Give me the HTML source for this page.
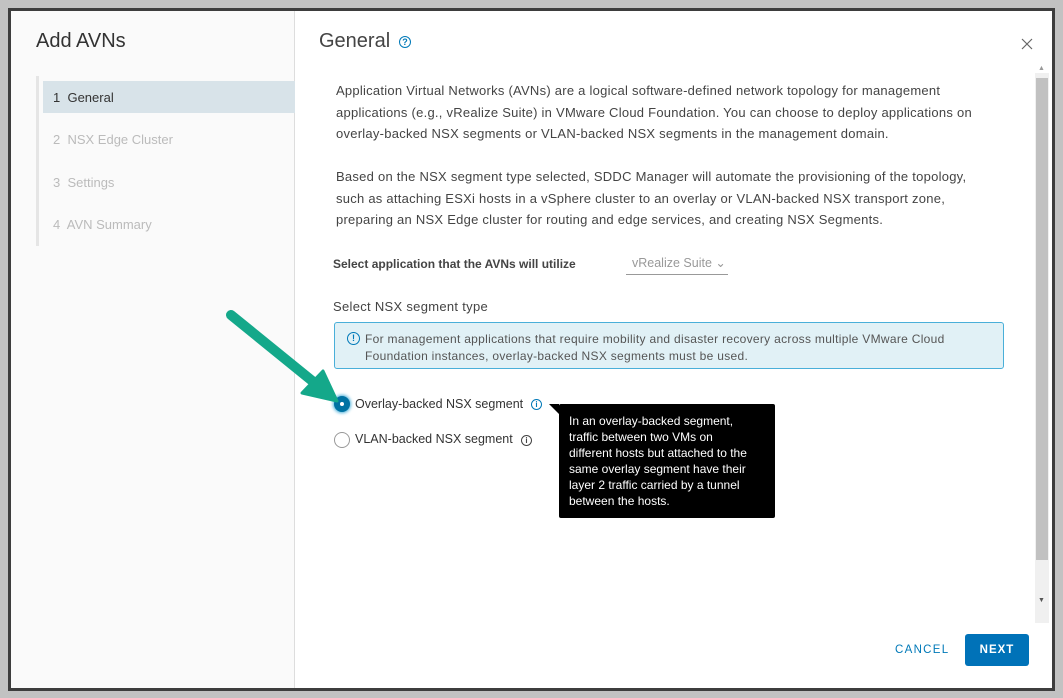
<!DOCTYPE html>
<html><head><meta charset="utf-8"><style>
*{box-sizing:border-box;margin:0;padding:0}
body{width:1063px;height:698px;background:#c2c2c2;font-family:"Liberation Sans",sans-serif;position:relative;overflow:hidden}
.frame{position:absolute;left:8px;top:8px;width:1047px;height:683px;background:#3d3d3d}
.win{position:absolute;left:11px;top:11px;width:1041px;height:677px;background:#fff}
.left{position:absolute;left:0;top:0;width:284px;height:677px;background:#fafafa;border-right:1px solid #ddd}
.t{position:absolute;color:#333;white-space:nowrap}
p.b{position:absolute;left:336px;font-size:13px;color:#444;line-height:21.5px;white-space:nowrap;letter-spacing:0.25px}
</style></head><body>
<div class="frame"></div>
<div class="win">
<div class="left">
<div class="t" style="left:25px;top:19px;font-size:20px;color:#333">Add AVNs</div>
<div style="position:absolute;left:25px;top:65px;width:3px;height:170px;background:#e5e5e5"></div>
<div style="position:absolute;left:32px;top:70px;width:252px;height:32px;background:#d8e3e9"></div>
<div class="t" style="left:42px;top:79px;font-size:13px;color:#333">1&nbsp; General</div>
<div class="t" style="left:42px;top:121px;font-size:13px;color:#bbb">2&nbsp; NSX Edge Cluster</div>
<div class="t" style="left:42px;top:164px;font-size:13px;color:#bbb">3&nbsp; Settings</div>
<div class="t" style="left:42px;top:206px;font-size:13px;color:#bbb">4&nbsp; AVN Summary</div>
</div>
<div class="t" style="left:308px;top:19px;font-size:20px;color:#444">General</div>
<div style="position:absolute;left:388px;top:25px;width:12px;height:12px;border:1.3px solid #0079b8;border-radius:50%;color:#0079b8;font-size:9px;line-height:10px;text-align:center;font-weight:bold">?</div>
<svg style="position:absolute;left:1010px;top:27px" width="12" height="12"><path d="M1 1L11 11M11 1L1 11" stroke="#666" stroke-width="1.2"/></svg>
<div style="position:absolute;left:1024px;top:62px;width:14px;height:550px;background:#f0f0f0"></div>
<div style="position:absolute;left:1025px;top:67px;width:12px;height:482px;background:#c1c1c1"></div>
<div style="position:absolute;left:1027px;top:54px;font-size:7px;color:#999">&#9650;</div>
<div style="position:absolute;left:1027px;top:586px;font-size:7px;color:#555">&#9660;</div>
</div>
<p class="b" style="top:80px">Application Virtual Networks (AVNs) are a logical software-defined network topology for management<br>applications (e.g., vRealize Suite) in VMware Cloud Foundation. You can choose to deploy applications on<br>overlay-backed NSX segments or VLAN-backed NSX segments in the management domain.</p>
<p class="b" style="top:166px">Based on the NSX segment type selected, SDDC Manager will automate the provisioning of the topology,<br>such as attaching ESXi hosts in a vSphere cluster to an overlay or VLAN-backed NSX transport zone,<br>preparing an NSX Edge cluster for routing and edge services, and creating NSX Segments.</p>
<div class="t" style="left:333px;top:257px;font-size:12px;font-weight:bold;color:#444">Select application that the AVNs will utilize</div>
<div style="position:absolute;left:626px;top:255px;width:102px;height:20px;border-bottom:1px solid #999;font-size:12.5px;color:#999;padding-left:6px;white-space:nowrap">vRealize Suite &#8964;</div>
<div class="t" style="left:333px;top:299px;font-size:13px;color:#444;letter-spacing:0.3px">Select NSX segment type</div>
<div style="position:absolute;left:334px;top:322px;width:670px;height:47px;background:#e1f1f6;border:1px solid #49afd9;border-radius:3px"></div>
<div style="position:absolute;left:347px;top:332px;width:13px;height:13px;border:1.3px solid #0079b8;border-radius:50%;color:#0079b8;font-size:9px;line-height:11px;text-align:center;font-weight:bold">!</div>
<div class="t" style="left:365px;top:331px;font-size:12px;color:#555;line-height:17px;letter-spacing:0.3px">For management applications that require mobility and disaster recovery across multiple VMware Cloud<br>Foundation instances, overlay-backed NSX segments must be used.</div>
<div style="position:absolute;left:334px;top:396px;width:16px;height:16px;border-radius:50%;background:#0072a3;box-shadow:0 0 3px 1px #49afd9"></div>
<div style="position:absolute;left:340px;top:402px;width:4px;height:4px;background:#fff;border-radius:50%"></div>
<div class="t" style="left:355px;top:397px;font-size:12.5px;color:#333">Overlay-backed NSX segment</div>
<div style="position:absolute;left:531px;top:399px;width:11px;height:11px;border:1.2px solid #0079b8;border-radius:50%;color:#0079b8;font-size:8px;line-height:9px;text-align:center;font-weight:bold">i</div>
<div style="position:absolute;left:334px;top:432px;width:16px;height:16px;border-radius:50%;border:1px solid #999;background:#fff"></div>
<div class="t" style="left:355px;top:432px;font-size:12.5px;color:#333">VLAN-backed NSX segment</div>
<div style="position:absolute;left:521px;top:435px;width:11px;height:11px;border:1.2px solid #444;border-radius:50%;color:#444;font-size:8px;line-height:9px;text-align:center;font-weight:bold">i</div>
<svg style="position:absolute;left:0;top:0" width="1063" height="698"><polygon points="549,404 559,404 559,414" fill="#000"/><line x1="231" y1="315" x2="316" y2="384" stroke="#14a88a" stroke-width="10" stroke-linecap="round"/><polygon points="302,393 323,371 337,401" fill="#14a88a" stroke="#14a88a" stroke-width="3" stroke-linejoin="round"/></svg>
<div style="position:absolute;left:559px;top:404px;width:216px;height:114px;background:#000;border-radius:2px;color:#fff;font-size:12px;line-height:16px;padding:9px 10px;white-space:nowrap">In an overlay-backed segment,<br>traffic between two VMs on<br>different hosts but attached to the<br>same overlay segment have their<br>layer 2 traffic carried by a tunnel<br>between the hosts.</div>
<div class="t" style="left:895px;top:644px;font-size:11.5px;color:#0079b8;letter-spacing:1.3px">CANCEL</div>
<div style="position:absolute;left:965px;top:634px;width:64px;height:32px;background:#0072b8;border-radius:3px;color:#fff;font-size:11.5px;font-weight:bold;letter-spacing:1px;text-align:center;line-height:32px">NEXT</div>
</body></html>
